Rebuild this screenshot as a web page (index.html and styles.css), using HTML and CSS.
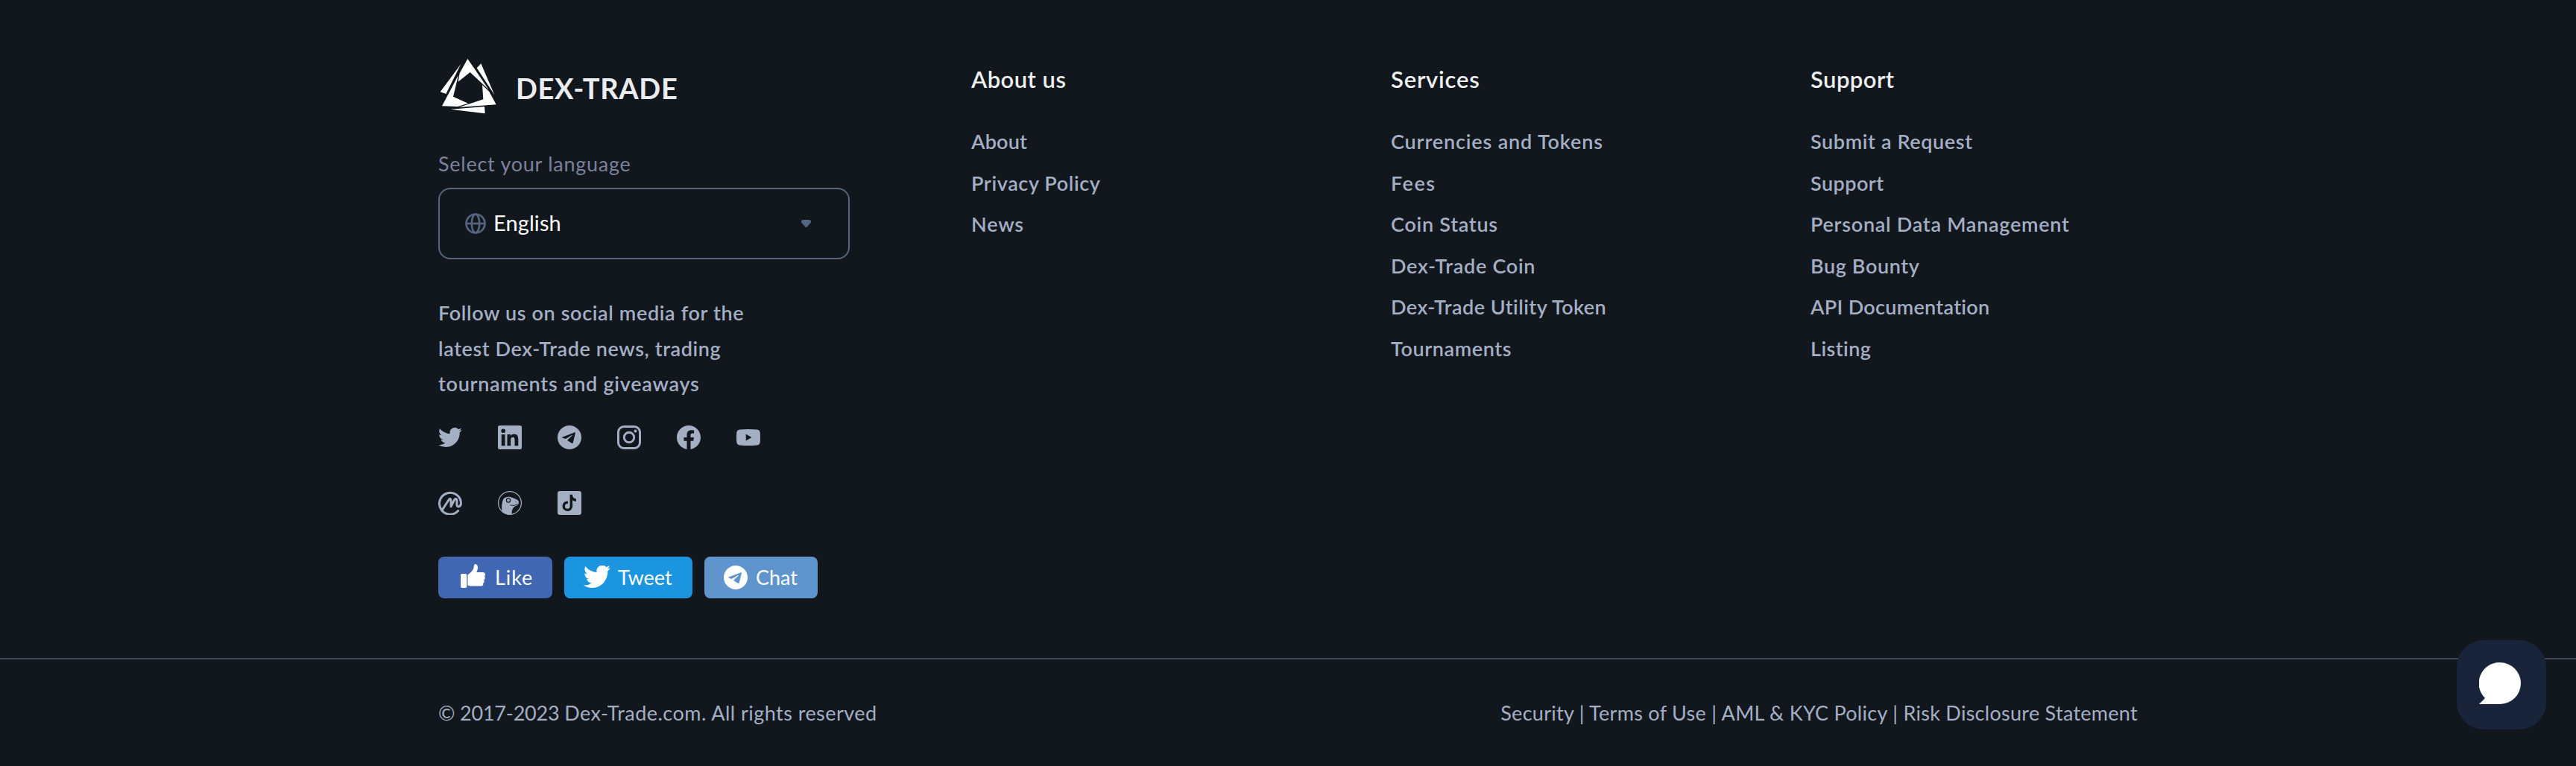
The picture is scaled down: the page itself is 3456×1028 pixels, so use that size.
FILE: index.html
```html
<!DOCTYPE html>
<html lang="en">
<head>
<meta charset="utf-8">
<title>Dex-Trade</title>
<link rel="stylesheet" href="styles.css">
</head>
<body>
<svg class="defs" aria-hidden="true">
  <symbol id="twitter" viewBox="0 0 24 24"><path d="M23.95 4.57a10 10 0 0 1-2.82.77 4.96 4.96 0 0 0 2.16-2.72c-.95.55-2 .95-3.13 1.18a4.92 4.92 0 0 0-8.38 4.48C7.69 8.1 4.07 6.13 1.64 3.16a4.92 4.92 0 0 0 1.52 6.57 4.9 4.9 0 0 1-2.23-.61v.06a4.92 4.92 0 0 0 3.95 4.83 5 5 0 0 1-2.21.08 4.94 4.94 0 0 0 4.6 3.42A9.87 9.87 0 0 1 0 19.54a13.99 13.99 0 0 0 7.55 2.21c9.05 0 14-7.5 14-13.98 0-.21 0-.42-.02-.63a9.94 9.94 0 0 0 2.42-2.57z"/></symbol>
  <symbol id="telegram" viewBox="0 0 32 32"><path fill-rule="evenodd" d="M16 0a16 16 0 1 1 0 32 16 16 0 0 1 0-32zM23.900 9.900c.1-.6-.3-.9-.9-.7L6.600 15.500c-.8.3-.8.9-.1 1.100l4 1.300 8.800-4.800c.5-.3.8 0 .5.300l-6.400 6c-.3.3-.3.5 0 .8l5.600 3.500c.9.500 1.500.3 1.800-.7z"/></symbol>
</svg>

<footer class="footer">
  <div class="footer-main">
    <div class="brand-column">
      <a class="brand">
        <svg class="brand-mark" viewBox="18 17 228 222">
          <path d="M130 17l23 33 62 91-75-70-48 38 6-34zM184 36l54 126-71-108zM103 38L43 158l-23-8zM93 82L72 169l60 27-42 13-63-2zM189 122l28 27 28 52-150 11 98-32zM62 220l136-11 2 28z"/>
        </svg>
        <span class="brand-name">DEX-TRADE</span>
      </a>
      <div class="language-label">Select your language</div>
      <div class="language-select">
        <svg class="globe" viewBox="0 0 28 28"><circle cx="14" cy="14" r="12.500"/><ellipse cx="14" cy="14" rx="5.200" ry="12.500"/><path d="M1.500 14h25"/></svg>
        <span class="language-value">English</span>
        <svg class="caret" viewBox="0 0 13 10"><path d="M2.500 0h8q2.500 0 2.500 2.500 0 1-.8 2L8.200 9q-1.700 1.800-3.400 0L.8 4.500Q0 3.500 0 2.500 0 0 2.500 0z"/></svg>
      </div>
      <p class="follow"><span>Follow us on social media for the</span><br><span class="tight">latest Dex-Trade news, trading</span><br><span class="loose">tournaments and giveaways</span></p>
      <div class="socials">
        <svg viewBox="0 0 32 32"><use href="#twitter" x="0" y="0" width="32" height="32"/></svg>
        <svg viewBox="0 0 32 32"><path fill-rule="evenodd" d="M2.500 0h27A2.500 2.500 0 0 1 32 2.500v27a2.500 2.500 0 0 1-2.500 2.500h-27A2.500 2.500 0 0 1 0 29.500v-27A2.500 2.500 0 0 1 2.500 0zM7.200 4.400a2.800 2.800 0 1 0 0 5.600 2.800 2.800 0 0 0 0-5.600zM4.800 12v15.300h4.800V12zm7.700 0v15.300h4.700v-7.600c0-2 .4-3.900 2.800-3.900s2.500 2.200 2.500 4v7.500h4.800v-8.400c0-4.100-.9-7.300-5.700-7.300-2.300 0-3.900 1.300-4.500 2.500V12z"/></svg>
        <svg viewBox="0 0 32 32"><use href="#telegram" width="32" height="32"/></svg>
        <svg viewBox="0 0 32 32"><rect class="line" x="1.500" y="1.500" width="29" height="29" rx="7.500"/><circle class="line" cx="16" cy="16" r="6.700"/><circle cx="24.500" cy="7.500" r="2"/></svg>
        <svg viewBox="0 0 24 24"><path d="M24 12.070C24 5.410 18.630 0 12 0S0 5.400 0 12.070C0 18.100 4.390 23.100 10.130 24v-8.440H7.080v-3.490h3.040V9.410c0-3.020 1.800-4.700 4.540-4.700 1.310 0 2.680.24 2.680.24v2.970h-1.500c-1.500 0-1.960.93-1.960 1.890v2.260h3.320l-.53 3.500h-2.800V24C19.620 23.100 24 18.100 24 12.070"/></svg>
        <svg viewBox="0 0 32 32"><path fill-rule="evenodd" d="M4.500 5.500Q16 4.500 27.500 5.500 31.400 5.900 31.700 9.500 32.300 16 31.700 22.500 31.400 26.100 27.500 26.500 16 27.500 4.500 26.500.6 26.100.3 22.500-.3 16 .3 9.500.6 5.900 4.500 5.500zM12.700 11.500v9l7.800-4.500z"/></svg>
        <svg viewBox="0 0 32 32"><path class="line round" d="M26.700 26.600A14.500 14.500 0 1 1 30.500 16c0 5.800-5.600 6.300-5.600 2.200v-5.200c0-3-2.300-3.200-3.500-.8L17 20.800v-8.300c0-2.200-1.800-2.700-2.900-.8L5.200 25.500"/></svg>
        <svg viewBox="0 0 32 32"><circle class="hair" cx="16" cy="16" r="15.400"/><path d="M5.800 28C4.500 21 5.500 14 7.500 10.500 10 7 16 7.200 19 8.800c3 1.600 8 2.400 8.800 5.200.4 2-.2 5.200-4.500 6.300C20 22 18.500 26 18.500 31 13.500 32 9 31 5.800 28z"/><circle class="cut" cx="14" cy="12.500" r="2.600"/><path class="cut thin" d="M16.500 18.900q5.500 1.700 9.500-1.200M23.500 14.300l1 .4"/></svg>
        <svg viewBox="0 0 32 32"><path fill-rule="evenodd" d="M3 0h26a3 3 0 0 1 3 3v26a3 3 0 0 1-3 3H3a3 3 0 0 1-3-3V3a3 3 0 0 1 3-3zM16.600 4.800v15.700a3.300 3.300 0 1 1-2.700-3.300v-3.700a6.800 6.800 0 1 0 6.200 6.800v-8a8.500 8.500 0 0 0 4.900 1.600v-3.400a5 5 0 0 1-4.900-5.700z"/></svg>
      </div>
      <div class="share">
        <a class="share-button like"><svg viewBox="0 0 33 32"><path d="M1.800 13h4.700Q8.300 13 8.300 14.800v15.400Q8.300 32 6.500 32H1.800Q0 32 0 30.200V14.800Q0 13 1.800 13zM9.500 14.500C13 12 16 9 17.200 6c.8-2 .2-5.200 1.900-5.800 2.300-.8 3.900 1.600 3.900 4.600 0 2.600-1 4.600-1.700 6.200h8.200c2.300 0 3.500 1.400 3.500 3 0 1.300-.6 2.100-1.300 2.600.9.600 1.300 1.500 1 2.700-.2 1.100-.9 1.800-1.700 2.200.6.700.8 1.500.6 2.500-.3 1-.9 1.600-1.600 2 .4.800.4 1.500 0 2.200-.5.900-1.500 1.300-2.800 1.300H13l-3.500-1z"/></svg><span>Like</span></a>
        <a class="share-button tweet"><svg viewBox="0 2.500 24 19.300" preserveAspectRatio="none"><path d="M23.950 4.570a10 10 0 0 1-2.820.77 4.960 4.960 0 0 0 2.160-2.720c-.95.55-2 .95-3.130 1.180a4.920 4.920 0 0 0-8.380 4.480C7.690 8.100 4.070 6.130 1.640 3.160a4.920 4.920 0 0 0 1.520 6.570 4.900 4.900 0 0 1-2.230-.61v.06a4.920 4.920 0 0 0 3.950 4.830 5 5 0 0 1-2.210.08 4.940 4.940 0 0 0 4.600 3.420A9.870 9.870 0 0 1 0 19.540a13.990 13.990 0 0 0 7.550 2.210c9.050 0 14-7.500 14-13.980 0-.21 0-.42-.02-.63a9.940 9.940 0 0 0 2.420-2.570z"/></svg><span>Tweet</span></a>
        <a class="share-button chat"><svg viewBox="0 0 32 32"><use href="#telegram" width="32" height="32"/></svg><span>Chat</span></a>
      </div>
    </div>

    <nav class="link-column">
      <h3 class="snug">About us</h3>
      <a class="flat">About</a>
      <a>Privacy Policy</a>
      <a class="wide">News</a>
    </nav>
    <nav class="link-column">
      <h3>Services</h3>
      <a class="wide">Currencies and Tokens</a>
      <a class="widest">Fees</a>
      <a class="loose">Coin Status</a>
      <a class="loose">Dex-Trade Coin</a>
      <a class="snug">Dex-Trade Utility Token</a>
      <a>Tournaments</a>
    </nav>
    <nav class="link-column">
      <h3 class="snug">Support</h3>
      <a>Submit a Request</a>
      <a class="snug">Support</a>
      <a class="loose">Personal Data Management</a>
      <a>Bug Bounty</a>
      <a class="tighter">API Documentation</a>
      <a class="snug">Listing</a>
    </nav>
  </div>

  <div class="footer-bottom">
    <span class="copyright"><span class="years">© 2017-2023 </span>Dex-Trade.com. All rights reserved</span>
    <span class="legal">Security | Terms of Use | AML &amp; KYC Policy | Risk Disclosure Statement</span>
  </div>
</footer>

<button class="chat-widget" aria-label="Open chat"><svg viewBox="0 0 56 56"><path d="M28 0a28 28 0 0 1 0 56H0l8-8A28 28 0 0 1 28 0z"/></svg></button>
</body>
</html>
```
FILE: styles.css
```css
* { box-sizing: border-box; }

body {
  margin: 0;
  background: #12171e;
  color: #a4afc4;
  font: 400 27px/34px Lato, "Open Sans", sans-serif;
  overflow: hidden;
}

svg { display: block; flex: none; fill: currentColor; }
.defs { width: 0; height: 0; position: absolute; }

.footer { height: 1028px; display: flex; flex-direction: column; }

.footer-main {
  height: 883px;
  padding: 79px 588px 0;
  display: grid;
  grid-template-columns: 714px 563px 563px 1fr;
}

.brand-column { width: 552px; }
.brand { display: flex; gap: 26px; height: 75px; color: #fff; }
.brand-mark { width: 76px; height: 74px; margin-left: 2px; }
.brand-name {
  color: #ebecef;
  font-size: 38px;
  font-weight: 700;
  line-height: 40px;
  letter-spacing: .65px;
  padding-top: 19px;
}

.language-label {
  margin-top: 49px;
  height: 34px;
  color: #7d819b;
  letter-spacing: .74px;
}
.language-select {
  margin-top: 15px;
  width: 552px;
  height: 96px;
  padding: 0 50px 0 34px;
  display: flex;
  align-items: center;
  border: 2px solid #56657f;
  border-radius: 16px;
  color: #56657f;
}
.globe { width: 28px; height: 28px; fill: none; stroke: currentColor; stroke-width: 2.7; }
.language-value {
  margin: 0 0 2px 10px;
  color: #fff;
  font-size: 29px;
  letter-spacing: .1px;
}
.caret { width: 13px; height: 10px; margin-left: auto; }

.follow {
  margin: 48px 0 0;
  font-weight: 600;
  line-height: 47.500px;
  letter-spacing: .64px;
}

.socials {
  margin-top: 32px;
  display: grid;
  grid-template-columns: repeat(6, 32px);
  gap: 56px 48px;
}
.socials svg { width: 32px; height: 32px; }
.line { fill: none; stroke: currentColor; stroke-width: 3; }
.round { stroke-linecap: round; stroke-linejoin: round; }
.hair { fill: none; stroke: currentColor; stroke-width: 1.2; }
.cut { fill: none; stroke: #12171e; stroke-width: 1.3; }
.thin { stroke-width: .9; }

.share { margin-top: 56px; display: flex; gap: 16px; }
.share-button {
  height: 56px;
  display: flex;
  align-items: center;
  border-radius: 8px;
  color: #fff;
  white-space: nowrap;
}
.share-button svg { height: 32px; }
.like { width: 153px; padding-left: 30px; background: #4267b2; letter-spacing: .9px; }
.like svg { width: 33px; margin-bottom: 4px; }
.like span { margin-left: 13px; }
.tweet { width: 172px; padding-left: 26px; background: #1b95e0; }
.tweet svg { width: 36px; height: 30px; margin-bottom: 1px; }
.tweet span { margin-left: 10px; }
.chat { width: 152px; padding-left: 26px; background: #5f94cd; }
.chat svg { width: 32px; }
.chat span { margin-left: 11px; }

.link-column { display: flex; flex-direction: column; font-weight: 600; padding-left: 1px; }
.link-column h3 {
  margin: 7px 0 36px;
  color: #eeeff0;
  font-size: 31px;
  font-weight: 600;
  line-height: 40px;
  letter-spacing: .79px;
}
.link-column a { line-height: 55.500px; letter-spacing: .62px; }

.follow .tight { letter-spacing: .6px; }
.follow .loose, .link-column .loose { letter-spacing: .73px; }
.link-column .snug { letter-spacing: .45px; }
.link-column .tighter { letter-spacing: .29px; }
.link-column .flat { letter-spacing: .2px; }
.link-column .wide { letter-spacing: .85px; }
.link-column .widest { letter-spacing: 1.5px; }

.footer-bottom {
  flex: 1;
  padding: 55px 588px 0;
  display: flex;
  justify-content: space-between;
  border-top: 2px solid #3b4754;
}
.copyright { letter-spacing: .46px; }
.years { letter-spacing: -.2px; }
.legal { letter-spacing: .28px; }

.chat-widget {
  position: fixed;
  right: 40px;
  bottom: 49px;
  width: 120px;
  height: 120px;
  padding: 0 0 0 30px;
  border: 0;
  border-radius: 36px;
  background: #19233a;
  color: #fff;
}
.chat-widget svg { width: 56px; height: 56px; margin-bottom: 4px; }
```
